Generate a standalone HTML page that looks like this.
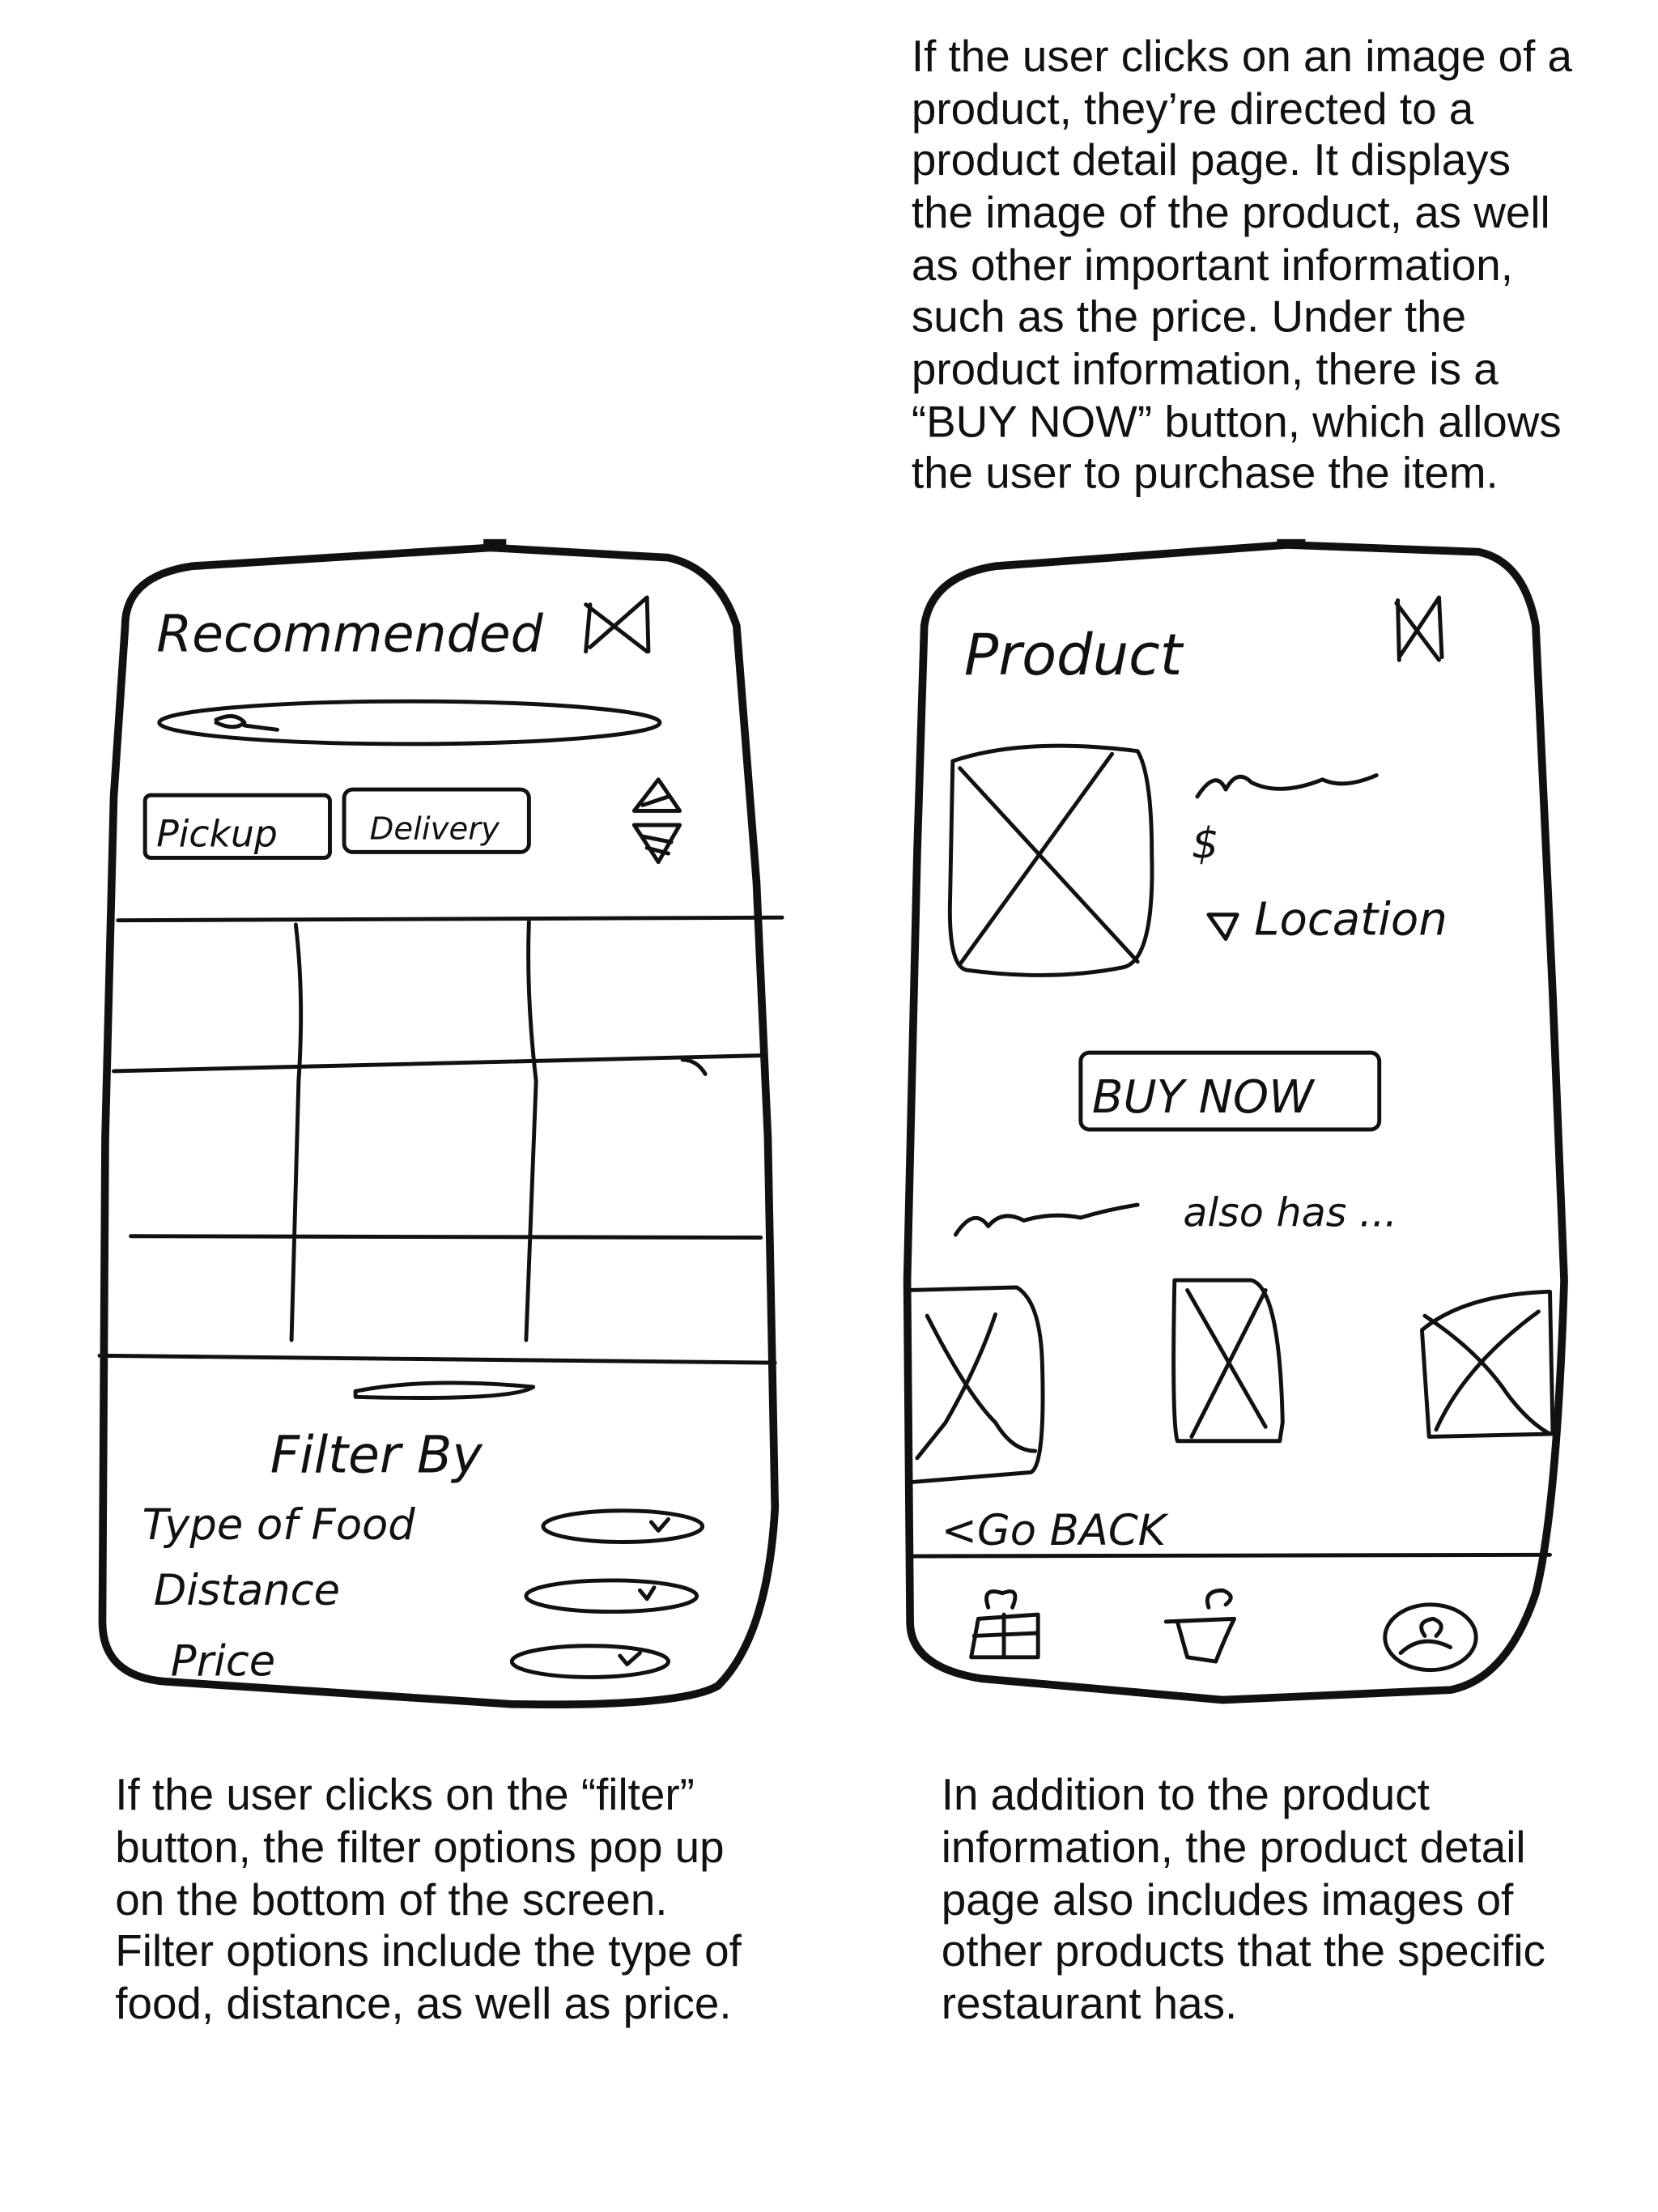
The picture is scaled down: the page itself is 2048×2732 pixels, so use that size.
<!DOCTYPE html>
<html><head><meta charset="utf-8"><style>
html,body{margin:0;padding:0;background:#fff;width:2048px;height:2732px;overflow:hidden}
svg{display:block}
.t{font-family:"Liberation Sans",Arial,sans-serif;font-size:31.2px;fill:#111}
.h{font-family:"DejaVu Sans",sans-serif;fill:#111;font-style:italic;font-weight:300}
.s{fill:none;stroke:#111;stroke-width:2.8;stroke-linecap:round;stroke-linejoin:round}
.b{fill:none;stroke:#111;stroke-width:5.5;stroke-linecap:round;stroke-linejoin:round}
</style></head><body>
<svg width="2048" height="2732" viewBox="0 0 1166 1555" preserveAspectRatio="none">
<g class="t">
<text x="641" y="50">If the user clicks on an image of a</text>
<text x="641" y="87">product, they’re directed to a</text>
<text x="641" y="123">product detail page. It displays</text>
<text x="641" y="160">the image of the product, as well</text>
<text x="641" y="197">as other important information,</text>
<text x="641" y="233">such as the price. Under the</text>
<text x="641" y="270">product information, there is a</text>
<text x="641" y="307">“BUY NOW” button, which allows</text>
<text x="641" y="343">the user to purchase the item.</text>
<text x="81" y="1272">If the user clicks on the “filter”</text>
<text x="81" y="1309">button, the filter options pop up</text>
<text x="81" y="1346">on the bottom of the screen.</text>
<text x="81" y="1382">Filter options include the type of</text>
<text x="81" y="1419">food, distance, as well as price.</text>
<text x="662" y="1272">In addition to the product</text>
<text x="662" y="1309">information, the product detail</text>
<text x="662" y="1346">page also includes images of</text>
<text x="662" y="1382">other products that the specific</text>
<text x="662" y="1419">restaurant has.</text>
</g>
<path class="b" d="M88,440 Q88,405 135,398 L345,385 L470,392 Q505,400 518,440 L532,620 L540,800 L545,1060 Q540,1150 505,1185 Q480,1200 360,1198 L115,1182 Q72,1178 72,1140 L74,800 L80,560 Z"/>
<path d="M340,382 L356,382" stroke="#111" stroke-width="6"/>
<text class="h" x="110" y="458" font-size="36">Recommended</text>
<path class="s" d="M412,425 L455,458 M455,420 L415,455 M415,425 L412,458 M455,420 L456,458"/>
<ellipse class="s" cx="288" cy="508" rx="176" ry="15"/>
<path class="s" d="M152,506 Q165,500 172,508 Q165,514 152,508 M172,510 L195,513"/>
<rect class="s" x="102" y="559" width="130" height="44" rx="4"/>
<text class="h" x="110" y="595" font-size="26">Pickup</text>
<rect class="s" x="242" y="555" width="130" height="44" rx="6"/>
<text class="h" x="260" y="590" font-size="22">Delivery</text>
<path class="s" d="M446,570 L463,548 L478,570 Z M452,566 L470,560 M446,580 L478,580 L463,606 Z M452,588 L472,592 M455,596 L470,600"/>
<path class="s" d="M83,647 L550,645 M80,753 L535,742 M92,869 L535,870 M70,953 L545,958 M208,650 Q214,700 210,760 L205,942 M372,648 Q370,700 377,760 L370,942 M480,745 Q490,745 496,755"/>
<path class="s" d="M250,978 Q300,968 375,975 Q360,985 250,982 Z"/>
<text class="h" x="190" y="1035" font-size="36">Filter By</text>
<text class="h" x="100" y="1082" font-size="30">Type of Food</text>
<text class="h" x="108" y="1128" font-size="30">Distance</text>
<text class="h" x="120" y="1178" font-size="30">Price</text>
<ellipse class="s" cx="438" cy="1073" rx="56" ry="11"/>
<ellipse class="s" cx="430" cy="1122" rx="60" ry="11"/>
<ellipse class="s" cx="415" cy="1168" rx="55" ry="11"/>
<path class="s" d="M458,1070 L463,1076 L470,1068 M450,1118 L455,1124 L460,1116 M436,1164 L441,1170 L450,1162"/>
<path class="b" d="M650,440 Q655,405 700,398 L905,383 L1040,388 Q1072,395 1080,440 L1092,700 L1100,900 Q1095,1060 1080,1120 Q1060,1180 1020,1188 L860,1195 L690,1180 Q640,1172 640,1140 L638,900 L645,600 Z"/>
<path d="M898,382 L918,382" stroke="#111" stroke-width="6"/>
<text class="h" x="678" y="474" font-size="40">Product</text>
<path class="s" d="M982,424 L1012,464 M1012,420 L984,462 M983,422 L984,464 M1012,420 L1014,462"/>
<path class="s" d="M670,535 Q720,518 800,528 Q810,545 810,600 Q812,675 790,680 Q740,690 680,682 Q668,680 668,640 Z M675,540 L800,676 M782,530 L675,678"/>
<path class="s" d="M842,560 Q855,540 862,555 Q870,540 880,550 Q900,560 930,548 Q945,555 968,545"/>
<text class="h" x="838" y="603" font-size="30">$</text>
<path class="s" d="M850,643 L870,643 L862,660 Z"/>
<text class="h" x="882" y="657" font-size="32">Location</text>
<rect class="s" x="760" y="740" width="210" height="54" rx="6"/>
<text class="h" x="768" y="782" font-size="32">BUY NOW</text>
<path class="s" d="M672,868 Q685,848 695,862 Q705,850 720,858 Q740,852 760,856 Q780,850 800,847"/>
<text class="h" x="832" y="862" font-size="28">also has ...</text>
<path class="s" d="M638,907 L715,905 Q732,915 733,960 Q735,1030 725,1035 L640,1042 M652,925 Q680,980 700,1000 Q712,1020 728,1020 M700,924 Q688,960 665,1000 L645,1025"/>
<path class="s" d="M826,900 L880,900 Q900,905 902,1000 L900,1013 L828,1013 Q824,1000 826,900 M835,907 L890,1003 M890,907 L838,1010"/>
<path class="s" d="M1000,935 Q1030,910 1090,908 L1092,1008 L1005,1010 Z M1002,925 Q1040,950 1060,980 Q1075,1000 1090,1008 M1082,922 Q1030,960 1010,1005"/>
<text class="h" x="662" y="1086" font-size="30">&lt;Go BACK</text>
<path class="s" d="M640,1094 L1090,1093"/>
<path class="s" d="M688,1138 L730,1135 L730,1165 L683,1165 Z M685,1150 L730,1148 M706,1135 L706,1165 M695,1130 Q690,1115 705,1120 Q718,1115 712,1130"/>
<path class="s" d="M820,1140 L868,1138 M828,1140 L835,1165 L855,1168 Q862,1150 868,1138 M850,1130 Q846,1118 860,1118 Q870,1122 862,1128"/>
<ellipse class="s" cx="1006" cy="1151" rx="32" ry="23"/>
<path class="s" d="M985,1162 Q1000,1148 1020,1158 M1002,1150 Q995,1140 1008,1138 Q1018,1142 1010,1150"/>
</svg>
</body></html>
